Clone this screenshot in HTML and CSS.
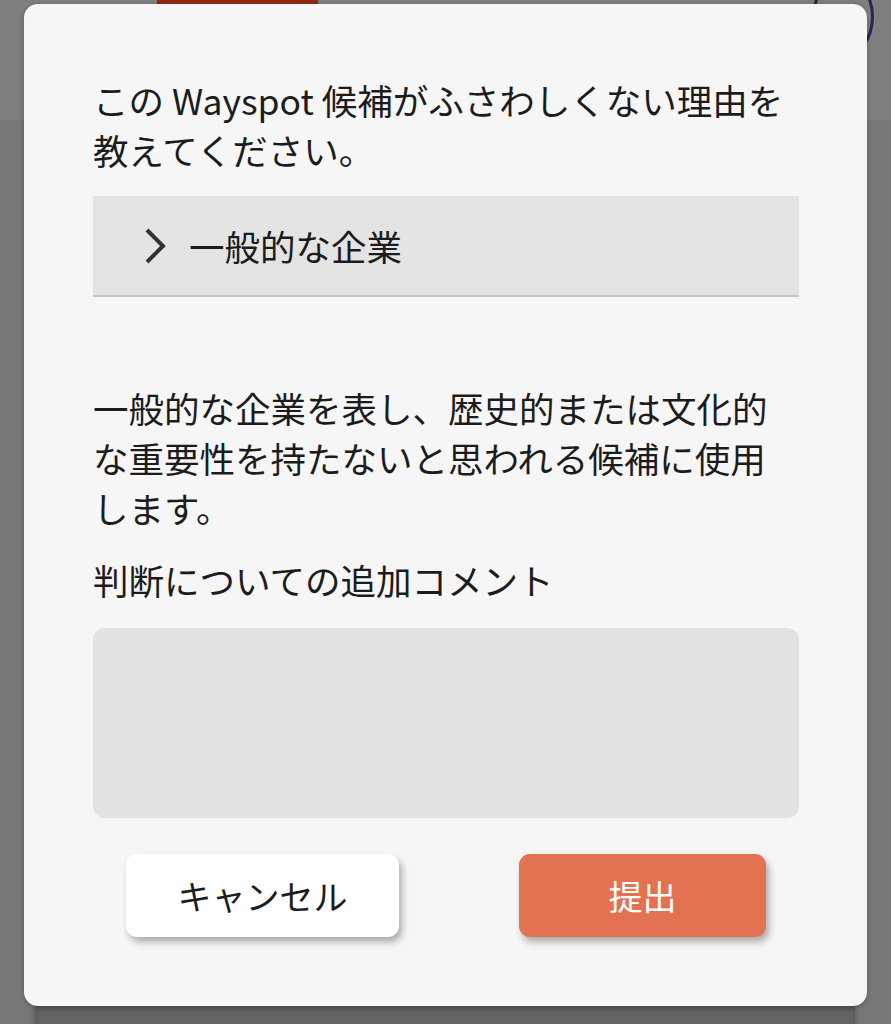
FILE: index.html
```html
<!DOCTYPE html>
<html lang="ja">
<head>
	<meta charset="UTF-8">
	<title>Wayspot</title>
	<link rel="stylesheet" href="styles.css">
</head>
<body>

	<!-- page behind the overlay -->
	<div class="backdrop">
		<div class="backdropTop"></div>
		<span class="tab"></span>
		<span class="avatar"></span>
		<div class="sheet"></div>
	</div>

	<div class="modal">
		<p class="question">この Wayspot 候補がふさわしくない理由を教えてください。</p>

		<div class="accordion">
			<svg class="chevron" width="24" height="38" viewBox="0 0 24 38">
				<path d="M4 3 L20 19 L4 35" fill="none" stroke="#333" stroke-width="4"/>
			</svg>
			<span>一般的な企業</span>
		</div>

		<p class="description">一般的な企業を表し、歴史的または文化的な重要性を持たないと思われる候補に使用します。</p>

		<p class="label">判断についての追加コメント</p>
		<div class="comment"></div>

		<div class="actions">
			<button class="btn cancel">キャンセル</button>
			<button class="btn submit">提出</button>
		</div>
	</div>

</body>
</html>
```

FILE: styles.css
```css
body {
	margin: 0;
	background: #777;
	font-family: "Noto Sans CJK JP", "Noto Sans", sans-serif;
	color: #1c1c1c;
	height: 1024px;
	overflow: hidden;
}

.backdrop {
	position: absolute;
	top: 0;
	left: 0;
	width: 891px;
	height: 1024px;
}

.backdropTop {
	height: 120px;
	background: #7e7e7e;
}

.tab {
	position: absolute;
	top: 0;
	left: 157px;
	width: 161px;
	height: 4px;
	background: #8f2a14;
}

.avatar {
	position: absolute;
	top: -24px;
	left: 812px;
	width: 62px;
	height: 82px;
	border-radius: 50%;
	border: 3px solid #2a2258;
	box-sizing: border-box;
}

.sheet {
	position: absolute;
	top: 1004px;
	left: 35px;
	width: 820px;
	height: 40px;
	background: #646464;
	box-shadow: inset 0 6px 6px rgba(0, 0, 0, 0.15), 0 0 6px rgba(0, 0, 0, 0.3);
}

.modal {
	position: relative;
	margin: 4px 0 0 24px;
	width: 843px;
	height: 1002px;
	box-sizing: border-box;
	padding: 71px 68px 0 69px;
	background: #f6f6f6;
	border-radius: 14px;
	box-shadow: 0 1px 4px rgba(0, 0, 0, 0.25);
}

.question, .description, .label {
	margin: 0;
	font-size: 35.5px;
	line-height: 50px;
}

.accordion {
	margin-top: 21px;
	height: 99px;
	background: #e4e4e4;
	border-bottom: 2px solid #c6c6c6;
	display: flex;
	align-items: center;
	font-size: 35.5px;
}

.chevron {
	margin-left: 50px;
	margin-right: 22px;
}

.description {
	margin-top: 86px;
}

.label {
	margin-top: 22px;
}

.comment {
	margin-top: 23px;
	height: 190px;
	background: #e2e2e2;
	border-radius: 12px;
}

.actions {
	margin-top: 36px;
	padding: 0 33px;
	display: flex;
	justify-content: space-between;
}

.btn {
	height: 83px;
	border: none;
	border-radius: 11px;
	font-family: "Noto Sans CJK JP", "Noto Sans", sans-serif;
	font-size: 34px;
	box-shadow: 3px 5px 7px rgba(0, 0, 0, 0.3);
	cursor: pointer;
}

.cancel {
	width: 273px;
	background: #fff;
	color: #1c1c1c;
}

.submit {
	width: 247px;
	background: #e37252;
	color: #fff;
}
```
